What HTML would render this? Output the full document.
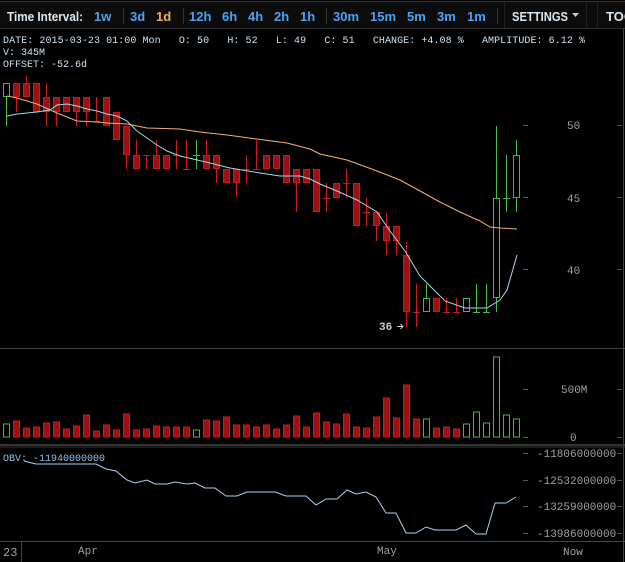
<!DOCTYPE html>
<html><head><meta charset="utf-8"><style>
html,body{margin:0;padding:0;background:#000;width:625px;height:562px;overflow:hidden}
svg{display:block}
</style></head><body>
<svg width="625" height="562" viewBox="0 0 625 562" xmlns="http://www.w3.org/2000/svg">
<rect width="625" height="562" fill="#000"/>
<rect x="0" y="1" width="625" height="28" fill="#0c0c0c"/>
<line x1="0" y1="1.5" x2="625" y2="1.5" stroke="#333"/>
<line x1="0" y1="28.5" x2="625" y2="28.5" stroke="#2a2a2a"/>
<g font-family="Liberation Sans, sans-serif" font-size="13" font-weight="bold">
<text x="7" y="21" fill="#dde8f0" textLength="76" lengthAdjust="spacingAndGlyphs">Time Interval:</text>
<text x="94" y="21" fill="#4aa3f5">1w</text>
<text x="130" y="21" fill="#4aa3f5">3d</text>
<text x="156" y="21" fill="#f0b050">1d</text>
<text x="189" y="21" fill="#4aa3f5">12h</text>
<text x="222" y="21" fill="#4aa3f5">6h</text>
<text x="248" y="21" fill="#4aa3f5">4h</text>
<text x="274" y="21" fill="#4aa3f5">2h</text>
<text x="300" y="21" fill="#4aa3f5">1h</text>
<text x="333" y="21" fill="#4aa3f5">30m</text>
<text x="370" y="21" fill="#4aa3f5">15m</text>
<text x="407" y="21" fill="#4aa3f5">5m</text>
<text x="437" y="21" fill="#4aa3f5">3m</text>
<text x="467" y="21" fill="#4aa3f5">1m</text>
<text x="512" y="21" fill="#dde8f0" textLength="56" lengthAdjust="spacingAndGlyphs">SETTINGS</text>
<text x="606" y="21" fill="#dde8f0">TOO</text>
</g>
<path d="M572 13h7l-3.5 4z" fill="#ccc"/>
<g stroke="#333"><line x1="123.5" y1="8" x2="123.5" y2="24"/><line x1="183.5" y1="8" x2="183.5" y2="24"/><line x1="326.5" y1="8" x2="326.5" y2="24"/><line x1="497.5" y1="8" x2="497.5" y2="24"/><line x1="504.5" y1="2" x2="504.5" y2="28" stroke="#222"/><line x1="586.5" y1="2" x2="586.5" y2="28" stroke="#222"/><line x1="597.5" y1="2" x2="597.5" y2="28" stroke="#222"/></g>
<g font-family="Liberation Mono, monospace" font-size="10" fill="#cde2f2">
<text x="3" y="43" xml:space="preserve" textLength="582" lengthAdjust="spacing">DATE: 2015-03-23 01:00 Mon   O: 50   H: 52   L: 49   C: 51   CHANGE: +4.08 %   AMPLITUDE: 6.12 %</text>
<text x="3" y="55">V: 345M</text>
<text x="3" y="67">OFFSET: -52.6d</text>
</g>
<g stroke="#444">
<line x1="0" y1="348.5" x2="625" y2="348.5"/>
<line x1="0" y1="445" x2="625" y2="445" stroke="#666"/>
<line x1="0" y1="447" x2="625" y2="447" stroke="#333"/>
<line x1="0" y1="541.5" x2="625" y2="541.5"/>
<line x1="623.5" y1="28" x2="623.5" y2="562"/>
<line x1="21.5" y1="541" x2="21.5" y2="562"/>
</g>
<g stroke="#555">
<line x1="523" y1="125.5" x2="528" y2="125.5"/><line x1="617" y1="125.5" x2="622" y2="125.5"/>
<line x1="523" y1="197.5" x2="528" y2="197.5"/><line x1="617" y1="197.5" x2="622" y2="197.5"/>
<line x1="523" y1="269.5" x2="528" y2="269.5"/><line x1="617" y1="269.5" x2="622" y2="269.5"/>
<line x1="523" y1="389.5" x2="528" y2="389.5"/><line x1="617" y1="389.5" x2="622" y2="389.5"/>
<line x1="523" y1="437.5" x2="528" y2="437.5"/><line x1="617" y1="437.5" x2="622" y2="437.5"/>
<line x1="523" y1="453.5" x2="528" y2="453.5"/><line x1="617" y1="453.5" x2="622" y2="453.5"/>
<line x1="523" y1="480.5" x2="528" y2="480.5"/><line x1="617" y1="480.5" x2="622" y2="480.5"/>
<line x1="523" y1="506.5" x2="528" y2="506.5"/><line x1="617" y1="506.5" x2="622" y2="506.5"/>
<line x1="523" y1="533.5" x2="528" y2="533.5"/><line x1="617" y1="533.5" x2="622" y2="533.5"/>
</g>
<g font-family="Liberation Mono, monospace" font-size="11" fill="#a0a0a0">
<text x="567" y="129">50</text><text x="567" y="202">45</text><text x="567" y="274">40</text>
<text x="561" y="393">500M</text><text x="570" y="441">0</text>
<text x="537" y="457">-11806000000</text><text x="537" y="484">-12532000000</text>
<text x="537" y="510">-13259000000</text><text x="537" y="537">-13986000000</text>
<text x="3" y="556" font-size="12">23</text><text x="78" y="554">Apr</text><text x="377" y="554">May</text><text x="563" y="555">Now</text>
<text x="379" y="330" fill="#ccc" font-weight="bold">36</text>
</g>
<path d="M397 326.5h6M400.5 324l2.5 2.5-2.5 2.5" stroke="#ccc" fill="none"/>
<g stroke="#d01818" fill="#a01010" stroke-width="1">
<line x1="16.5" y1="83" x2="16.5" y2="112"/><line x1="26.5" y1="76" x2="26.5" y2="97"/>
<line x1="46.5" y1="83" x2="46.5" y2="126"/><line x1="56.5" y1="97" x2="56.5" y2="126"/><line x1="76.5" y1="97" x2="76.5" y2="126"/><line x1="86.5" y1="97" x2="86.5" y2="126"/>
<line x1="96.5" y1="97" x2="96.5" y2="122"/><line x1="93" y1="121.5" x2="100" y2="121.5"/>
<line x1="126.5" y1="126" x2="126.5" y2="169"/><line x1="136.5" y1="140" x2="136.5" y2="169"/>
<line x1="146.5" y1="155" x2="146.5" y2="169"/><line x1="143" y1="155.5" x2="150" y2="155.5"/>
<line x1="156.5" y1="140" x2="156.5" y2="169"/>
<line x1="176.5" y1="140" x2="176.5" y2="169"/><line x1="173" y1="155.5" x2="180" y2="155.5"/>
<line x1="186.5" y1="140" x2="186.5" y2="169"/><line x1="183" y1="169.5" x2="190" y2="169.5"/>
<line x1="206.5" y1="140" x2="206.5" y2="169"/><line x1="216.5" y1="155" x2="216.5" y2="183"/>
<line x1="236.5" y1="169" x2="236.5" y2="197"/>
<line x1="246.5" y1="155" x2="246.5" y2="183"/><line x1="243" y1="169.5" x2="250" y2="169.5"/>
<line x1="256.5" y1="140" x2="256.5" y2="169"/><line x1="253" y1="169.5" x2="260" y2="169.5"/>
<line x1="296.5" y1="169" x2="296.5" y2="212"/>
<line x1="326.5" y1="183" x2="326.5" y2="212"/><line x1="323" y1="198.5" x2="330" y2="198.5"/>
<line x1="346.5" y1="169" x2="346.5" y2="198"/><line x1="343" y1="183.5" x2="350" y2="183.5"/>
<line x1="366.5" y1="198" x2="366.5" y2="226"/><line x1="363" y1="212.5" x2="370" y2="212.5"/>
<line x1="376.5" y1="212" x2="376.5" y2="241"/><line x1="386.5" y1="213" x2="386.5" y2="255"/><line x1="396.5" y1="226" x2="396.5" y2="255"/>
<line x1="406.5" y1="242" x2="406.5" y2="327"/>
<line x1="416.5" y1="284" x2="416.5" y2="327"/><line x1="413" y1="312.5" x2="420" y2="312.5"/>
<line x1="446.5" y1="298" x2="446.5" y2="312"/><line x1="443" y1="312.5" x2="450" y2="312.5"/>
<line x1="456.5" y1="298" x2="456.5" y2="312"/><line x1="453" y1="312.5" x2="460" y2="312.5"/>
<rect x="13.5" y="83.5" width="6" height="13"/><rect x="23.5" y="83.5" width="6" height="13"/><rect x="33.5" y="83.5" width="6" height="28"/>
<rect x="43.5" y="97.5" width="6" height="14"/><rect x="53.5" y="97.5" width="6" height="14"/><rect x="63.5" y="97.5" width="6" height="14"/><rect x="73.5" y="97.5" width="6" height="14"/><rect x="83.5" y="97.5" width="6" height="14"/>
<rect x="103.5" y="97.5" width="6" height="28"/><rect x="113.5" y="112.5" width="6" height="27"/><rect x="123.5" y="126.5" width="6" height="28"/>
<rect x="133.5" y="155.5" width="6" height="13"/><rect x="153.5" y="155.5" width="6" height="13"/><rect x="163.5" y="155.5" width="6" height="13"/>
<rect x="203.5" y="155.5" width="6" height="13"/><rect x="213.5" y="155.5" width="6" height="13"/><rect x="223.5" y="169.5" width="6" height="13"/><rect x="233.5" y="169.5" width="6" height="13"/>
<rect x="263.5" y="155.5" width="6" height="13"/><rect x="273.5" y="155.5" width="6" height="13"/><rect x="283.5" y="155.5" width="6" height="27"/><rect x="293.5" y="169.5" width="6" height="13"/><rect x="303.5" y="169.5" width="6" height="13"/><rect x="313.5" y="169.5" width="6" height="42"/>
<rect x="333.5" y="183.5" width="6" height="14"/><rect x="353.5" y="183.5" width="6" height="42"/><rect x="373.5" y="212.5" width="6" height="13"/><rect x="383.5" y="226.5" width="6" height="14"/><rect x="393.5" y="226.5" width="6" height="14"/>
<rect x="403.5" y="255.5" width="6" height="56"/><rect x="433.5" y="298.5" width="6" height="13"/>
</g>
<g stroke="#44bb44" fill="none">
<line x1="6.5" y1="97" x2="6.5" y2="126"/><rect x="3.5" y="83.5" width="6" height="13"/>
<line x1="196.5" y1="140" x2="196.5" y2="169"/><line x1="193" y1="155.5" x2="200" y2="155.5"/>
<line x1="426.5" y1="284" x2="426.5" y2="298"/><rect x="423.5" y="298.5" width="6" height="13"/>
<rect x="463.5" y="298.5" width="6" height="13"/>
<line x1="476.5" y1="284" x2="476.5" y2="312"/><line x1="473" y1="312.5" x2="480" y2="312.5"/>
<line x1="486.5" y1="284" x2="486.5" y2="312"/><line x1="483" y1="312.5" x2="490" y2="312.5"/>
<line x1="496.5" y1="126" x2="496.5" y2="312"/><rect x="493.5" y="198.5" width="6" height="99" fill="#000"/>
<line x1="506.5" y1="155" x2="506.5" y2="212"/><line x1="503" y1="198.5" x2="510" y2="198.5"/>
<line x1="516.5" y1="140" x2="516.5" y2="212"/><rect x="513.5" y="155.5" width="6" height="42" fill="#000"/>
</g>
<polyline fill="none" stroke="#f5b070" stroke-width="1" points="7,96 17,98 37,104 57,113 77,121 97,122 107,123 127,124 147,128 180,129 200,132 227,135 257,139 287,143 310,149 320,154 347,160 377,171 400,180 420,191 440,202 460,212 480,221 490,227 500,228 517,229"/>
<polyline fill="none" stroke="#a8d4ee" stroke-width="1" points="7,116 17,114 37,112 50,110 57,105 67,104 77,106 87,109 97,111 107,114 117,116 127,121 137,131 147,138 157,145 167,151 180,156 210,163 230,168 260,173 280,176 300,176 310,179 320,184 337,191 357,200 377,212 390,231 405,251 420,276 433,289 445,301 465,308 487,308 500,300 507,290 517,255"/>
<g fill="#a01010" stroke="#d01818">
<rect x="13.5" y="421" width="6" height="16"/><rect x="23.5" y="428" width="6" height="9"/><rect x="33.5" y="427" width="6" height="10"/><rect x="43.5" y="423" width="6" height="14"/><rect x="53.5" y="422" width="6" height="15"/><rect x="63.5" y="429" width="6" height="8"/><rect x="73.5" y="426" width="6" height="11"/><rect x="83.5" y="415" width="6" height="22"/><rect x="93.5" y="431" width="6" height="6"/><rect x="103.5" y="425" width="6" height="12"/><rect x="113.5" y="430" width="6" height="7"/><rect x="123.5" y="414" width="6" height="23"/><rect x="133.5" y="430" width="6" height="7"/><rect x="143.5" y="429" width="6" height="8"/><rect x="153.5" y="426" width="6" height="11"/><rect x="163.5" y="427" width="6" height="10"/><rect x="173.5" y="427" width="6" height="10"/><rect x="183.5" y="427" width="6" height="10"/>
<rect x="203.5" y="420" width="6" height="17"/><rect x="213.5" y="421" width="6" height="16"/><rect x="223.5" y="417" width="6" height="20"/><rect x="233.5" y="425" width="6" height="12"/><rect x="243.5" y="425" width="6" height="12"/><rect x="253.5" y="427" width="6" height="10"/><rect x="263.5" y="425" width="6" height="12"/><rect x="273.5" y="429" width="6" height="8"/><rect x="283.5" y="425" width="6" height="12"/><rect x="293.5" y="416" width="6" height="21"/><rect x="303.5" y="427" width="6" height="10"/><rect x="313.5" y="413" width="6" height="24"/><rect x="323.5" y="422" width="6" height="15"/><rect x="333.5" y="424" width="6" height="13"/><rect x="343.5" y="414" width="6" height="23"/><rect x="353.5" y="427" width="6" height="10"/><rect x="363.5" y="428" width="6" height="9"/><rect x="373.5" y="417" width="6" height="20"/><rect x="383.5" y="398" width="6" height="39"/><rect x="393.5" y="418" width="6" height="19"/><rect x="403.5" y="385" width="6" height="52"/><rect x="413.5" y="419" width="6" height="18"/>
<rect x="433.5" y="428" width="6" height="9"/><rect x="443.5" y="427" width="6" height="10"/><rect x="453.5" y="429" width="6" height="8"/>
</g>
<g fill="none" stroke="#44bb44">
<rect x="3.5" y="424" width="6" height="13"/><rect x="193.5" y="430" width="6" height="7"/><rect x="423.5" y="419" width="6" height="18"/>
<rect x="463.5" y="424" width="6" height="13"/><rect x="473.5" y="412" width="6" height="25"/><rect x="483.5" y="423" width="6" height="14"/><rect x="493.5" y="357" width="6" height="80"/><rect x="503.5" y="415" width="6" height="22"/><rect x="513.5" y="419" width="6" height="18"/>
</g>
<text x="3" y="461" font-family="Liberation Mono, monospace" font-size="10" fill="#8ec4ec">OBV: -11940000000</text>
<polyline fill="none" stroke="#a8d4ee" stroke-width="1" points="24,461 36,464 96,464 106,469 116,471 127,480 135,483 147,480 155,484 167,484 175,482 187,484 195,483 205,488 215,488 226,496 237,496 247,492 275,492 286,496 306,496 316,505 326,499 337,499 347,490 356,494 366,492 376,497 386,513 396,513 406,533 416,533 426,527 435,530 456,530 466,525 476,534 486,534 495,503 506,503 516,497"/>
</svg>
</body></html>
